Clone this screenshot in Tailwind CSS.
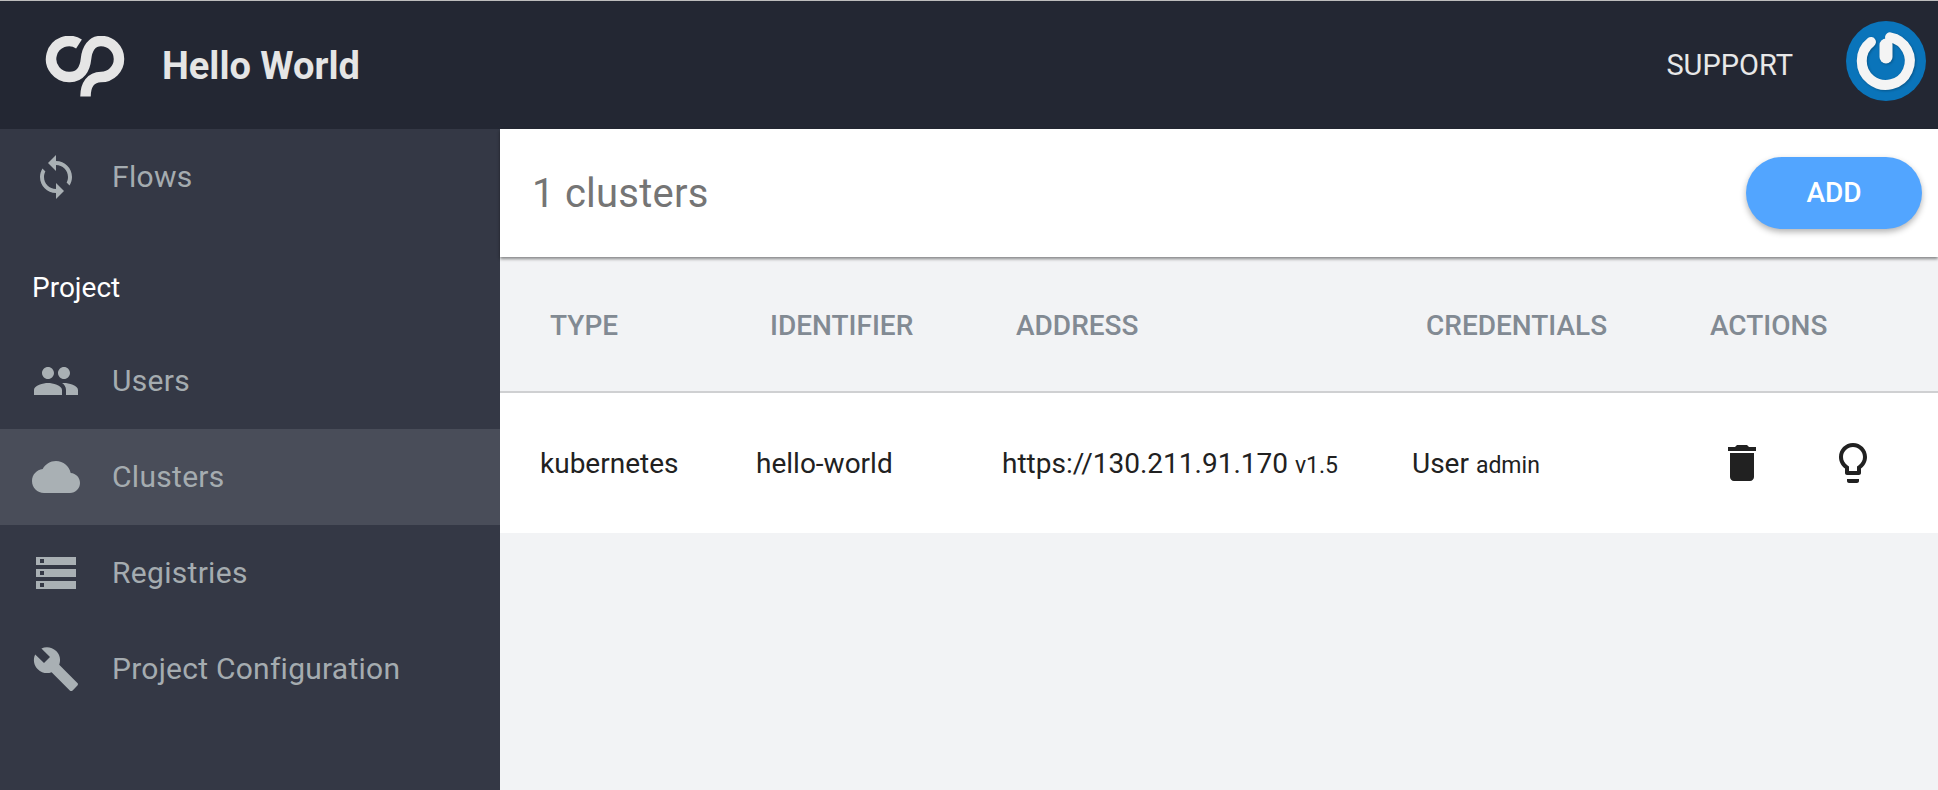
<!DOCTYPE html>
<html><head><meta charset="utf-8"><script src="https://cdn.jsdelivr.net/npm/@tailwindcss/browser@4"></script></head>
<body class="m-0 bg-[#f2f3f5] font-['Roboto',sans-serif]">
<div class="w-[1938px] h-[790px] overflow-hidden flex flex-col">
  <header class="h-[129px] shrink-0 bg-[#232733] border-t border-[#bdbdbd] flex items-center">
    <svg class="ml-[45px] mt-[8px] w-[80px] h-[66px] shrink-0" viewBox="44 36 80 66" fill="none" stroke="#e5e5e5" stroke-width="10.500"><path d="M78 44 A18 18 0 1 0 69 77 C79 77 84 69 85 59 C86 49 91 41 100 41 A18 18 0 0 1 100 77 C90 77 84.500 85 84.500 96.500"/></svg>
    <div class="ml-[37px] pt-[2px] text-[38px] leading-none font-bold text-[#e5e5e5]">Hello World</div>
    <div class="ml-auto text-[29px] leading-none text-[#e8e8e8]">SUPPORT</div>
    <svg class="ml-[53px] mr-[12px] mb-[8px] w-[80px] h-[80px] shrink-0" viewBox="0 0 80 80"><circle cx="40" cy="40" r="40" fill="#0a74ba"/><g class="drop-shadow-[1px_1px_1px_rgba(0,0,0,0.25)]"><path d="M25 21 A24 24 0 1 0 44 16.300" fill="none" stroke="#f4f4f4" stroke-width="10" stroke-linecap="round"/><path d="M40 24 V36" fill="none" stroke="#f4f4f4" stroke-width="13" stroke-linecap="round"/></g></svg>
  </header>
  <div class="flex flex-1 min-h-0">
    <aside class="w-[500px] shrink-0 bg-[#343845] text-[#a5acb0] text-[30px] tracking-[0.3px]">
      <div class="h-[96px] flex items-center pl-[32px]">
        <svg class="w-[48px] h-[48px] fill-[#a9b0b4] shrink-0" viewBox="0 0 24 24"><path d="M12 4V1L8 5l4 4V6c3.31 0 6 2.69 6 6 0 1.01-.25 1.97-.7 2.8l1.46 1.46C19.54 15.03 20 13.57 20 12c0-4.42-3.58-8-8-8zm0 14c-3.31 0-6-2.69-6-6 0-1.01.25-1.97.7-2.8L5.24 7.74C4.46 8.97 4 10.43 4 12c0 4.42 3.58 8 8 8v3l4-4-4-4v3z"/></svg>
        <span class="ml-[32px] pb-[2px]">Flows</span>
      </div>
      <div class="h-[108px] flex items-center pl-[32px] pt-[17px] text-[28px] tracking-normal text-white">Project</div>
      <div class="h-[96px] flex items-center pl-[32px]">
        <svg class="w-[48px] h-[48px] fill-[#a9b0b4] shrink-0" viewBox="0 0 24 24"><path d="M16 11c1.66 0 2.99-1.34 2.99-3S17.66 5 16 5c-1.66 0-3 1.34-3 3s1.34 3 3 3zm-8 0c1.66 0 2.99-1.34 2.99-3S9.66 5 8 5C6.34 5 5 6.34 5 8s1.34 3 3 3zm0 2c-2.33 0-7 1.17-7 3.5V19h14v-2.5c0-2.33-4.67-3.5-7-3.5zm8 0c-.29 0-.62.02-.97.05 1.16.84 1.97 1.97 1.97 3.45V19h6v-2.5c0-2.33-4.67-3.5-7-3.5z"/></svg>
        <span class="ml-[32px] pb-[2px]">Users</span>
      </div>
      <div class="h-[96px] flex items-center pl-[32px] bg-[#494d59]">
        <svg class="w-[48px] h-[48px] fill-[#a9b0b4] shrink-0" viewBox="0 0 24 24"><path d="M19.35 10.04C18.67 6.59 15.64 4 12 4 9.11 4 6.6 5.64 5.35 8.04 2.34 8.36 0 10.91 0 14c0 3.31 2.69 6 6 6h13c2.76 0 5-2.24 5-5 0-2.64-2.05-4.78-4.65-4.96z"/></svg>
        <span class="ml-[32px] pb-[2px]">Clusters</span>
      </div>
      <div class="h-[96px] flex items-center pl-[32px]">
        <svg class="w-[48px] h-[48px] fill-[#a9b0b4] shrink-0" viewBox="0 0 24 24"><path d="M2 20h20v-4H2v4zm2-3h2v2H4v-2zM2 4v4h20V4H2zm4 3H4V5h2v2zm-4 7h20v-4H2v4zm2-3h2v2H4v-2z"/></svg>
        <span class="ml-[32px] pb-[2px]">Registries</span>
      </div>
      <div class="h-[96px] flex items-center pl-[32px]">
        <svg class="w-[48px] h-[48px] fill-[#a9b0b4] shrink-0" viewBox="0 0 24 24"><path d="M22.7 19l-9.1-9.1c.9-2.3.4-5-1.5-6.9-2-2-5-2.4-7.4-1.3L9 6 6 9 1.6 4.7C.4 7.1.9 10.1 2.9 12.1c1.9 1.9 4.6 2.4 6.9 1.5l9.1 9.1c.4.4 1 .4 1.4 0l2.3-2.3c.5-.4.5-1.1.1-1.4z"/></svg>
        <span class="ml-[32px] pb-[2px] tracking-[0.25px]">Project Configuration</span>
      </div>
    </aside>
    <main class="flex-1 min-w-0">
      <div class="h-[128px] bg-white flex items-center justify-between pl-[32px] pr-[16px] shadow-[0_2px_3px_rgba(0,0,0,0.45)] relative">
        <div class="pt-[2px] text-[40px] leading-none text-[#757575] tracking-[0.25px]">1 clusters</div>
        <div class="w-[176px] h-[72px] rounded-full bg-[#52a5ff] flex items-center justify-center text-[28px] font-medium text-white shadow-[0_3px_6px_rgba(0,0,0,0.3)]">ADD</div>
      </div>
      <div class="h-[136px] pt-[4px] flex items-center border-b-2 border-[#cfd0d2] text-[28px] leading-none font-medium text-[#828a93]">
        <div class="w-[270px] pl-[50px]">TYPE</div>
        <div class="w-[246px]">IDENTIFIER</div>
        <div class="w-[410px]">ADDRESS</div>
        <div class="w-[284px]">CREDENTIALS</div>
        <div>ACTIONS</div>
      </div>
      <div class="h-[140px] bg-white flex items-center text-[28px] leading-none text-[#212121]">
        <div class="w-[256px] pl-[40px] pt-[2px]">kubernetes</div>
        <div class="w-[246px] pt-[2px]">hello-world</div>
        <div class="w-[410px] pt-[2px]">https://130.211.91.170 <span class="text-[23px]">v1.5</span></div>
        <div class="w-[306px] pt-[2px]">User <span class="text-[23px]">admin</span></div>
        <svg class="w-[48px] h-[48px] fill-[#212121] shrink-0" viewBox="0 0 24 24"><path d="M6 19c0 1.1.9 2 2 2h8c1.1 0 2-.9 2-2V7H6v12zM19 4h-3.500l-1-1h-5l-1 1H5v2h14V4z"/></svg>
        <svg class="ml-[63px] w-[48px] h-[48px] fill-[#212121] shrink-0" viewBox="0 0 24 24"><path d="M9 21c0 .55.45 1 1 1h4c.55 0 1-.45 1-1v-1H9v1zm3-19C8.14 2 5 5.14 5 9c0 2.38 1.19 4.47 3 5.74V17c0 .55.45 1 1 1h6c.55 0 1-.45 1-1v-2.26c1.81-1.27 3-3.36 3-5.74 0-3.86-3.14-7-7-7zm2.85 11.1l-.85.6V16h-4v-2.3l-.85-.6C7.8 12.16 7 10.63 7 9c0-2.76 2.24-5 5-5s5 2.24 5 5c0 1.63-.8 3.16-2.15 4.1z"/></svg>
      </div>
    </main>
  </div>
</div>
</body></html>
